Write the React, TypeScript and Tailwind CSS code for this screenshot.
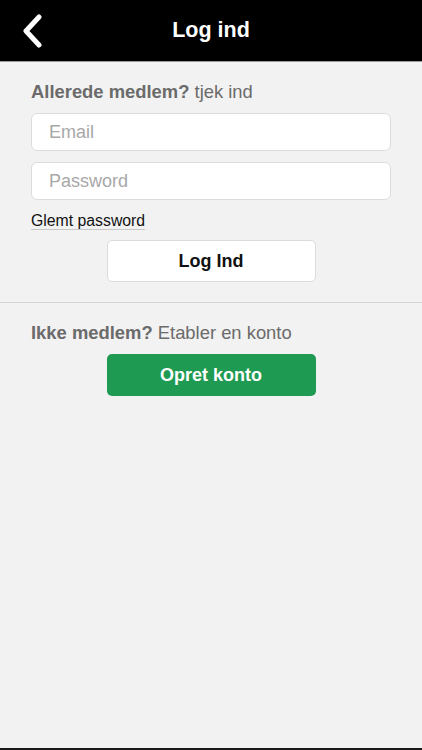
import { useState } from "react";

const font = { fontFamily: '"Liberation Sans", Arial, sans-serif' };

function BackIcon() {
  return (
    <svg width="24" height="34" viewBox="0 0 24 34" fill="none">
      <path
        d="M18 3 L5 17 L18 31"
        stroke="white"
        strokeWidth="5"
        strokeLinecap="round"
        strokeLinejoin="round"
      />
    </svg>
  );
}

export default function App() {
  const [email, setEmail] = useState("");
  const [password, setPassword] = useState("");

  return (
    <main
      className="flex h-[750px] w-full flex-col bg-[#f2f2f2] text-[#111111]"
      style={font}
    >
      <header className="relative flex h-[62px] shrink-0 items-center justify-center border-b border-[#9a9a9a] bg-black">
        <button type="button" className="absolute left-[21px] top-[14px]">
          <BackIcon />
        </button>
        <h1 className="text-[21.5px] font-bold text-white">Log ind</h1>
      </header>

      <section className="flex flex-col px-[31px] pt-[19px]">
        <p className="text-[18.4px] leading-[22px] text-[#6b6b6b]">
          <span className="font-bold">Allerede medlem?</span> tjek ind
        </p>

        <input
          type="email"
          placeholder="Email"
          value={email}
          onChange={(e) => setEmail(e.target.value)}
          className="mt-[10px] h-[38px] w-full rounded-[6px] border border-[#dcdcdc] bg-white px-[17px] text-[18px] outline-none placeholder:text-[#a8a8a8]"
        />
        <input
          type="password"
          placeholder="Password"
          value={password}
          onChange={(e) => setPassword(e.target.value)}
          className="mt-[11px] h-[38px] w-full rounded-[6px] border border-[#dcdcdc] bg-white px-[17px] text-[18px] outline-none placeholder:text-[#a8a8a8]"
        />

        <button
          type="button"
          className="mt-[12px] self-start border-b border-[#c8c8c8] text-[15.8px] leading-[17px] text-[#111111]"
        >
          Glemt password
        </button>

        <button
          type="button"
          className="mt-[10px] h-[42px] w-[209px] self-center rounded-[5px] border border-[#dcdcdc] bg-white text-[18px] font-bold text-[#111111]"
        >
          Log Ind
        </button>
      </section>

      <div className="mt-[20px] h-px bg-[#d6d6d6]" />

      <section className="flex flex-col px-[31px] pt-[19px]">
        <p className="text-[18.4px] leading-[22px] text-[#6b6b6b]">
          <span className="font-bold">Ikke medlem?</span> Etabler en konto
        </p>
        <button
          type="button"
          className="mt-[10px] h-[42px] w-[209px] self-center rounded-[5px] bg-[#1f9a53] text-[18px] font-bold text-white"
        >
          Opret konto
        </button>
      </section>

      <div className="mt-auto h-[2px] bg-[#1a1a1a]" />
    </main>
  );
}
